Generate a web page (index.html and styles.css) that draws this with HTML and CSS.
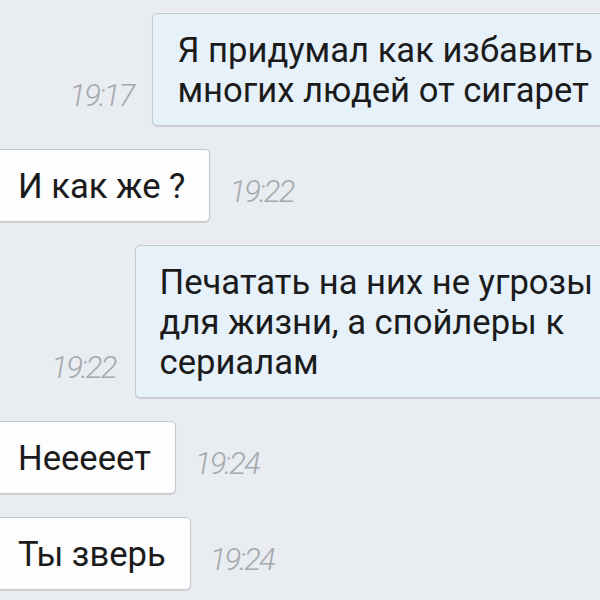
FILE: index.html
```html
<!DOCTYPE html>
<html lang="ru">
<head>
    <meta charset="UTF-8">
    <meta name="viewport" content="width=device-width, initial-scale=1.0">
    <title>Чат</title>
    <link rel="stylesheet" href="styles.css">
</head>
<body>
    <div class="chat">
        <div class="row out">
            <span class="time">19:17</span>
            <div class="bubble">Я придумал как избавить<br>многих людей от сигарет</div>
        </div>
        <div class="row in">
            <div class="bubble">И как же ?</div>
            <span class="time">19:22</span>
        </div>
        <div class="row out">
            <span class="time">19:22</span>
            <div class="bubble">Печатать на них не угрозы<br>для жизни, а спойлеры к<br>сериалам</div>
        </div>
        <div class="row in">
            <div class="bubble">Нееееет</div>
            <span class="time">19:24</span>
        </div>
        <div class="row in">
            <div class="bubble">Ты зверь</div>
            <span class="time">19:24</span>
        </div>
    </div>
</body>
</html>
```

FILE: styles.css
```css
body {
    margin: 0;
    height: 100vh;
    overflow: hidden;
    background-color: #e9ecf0;
    font-family: Roboto, "Noto Sans", sans-serif;
}
.chat {
    display: flex;
    flex-direction: column;
    gap: 23px;
    padding-top: 13px;
}
.row {
    display: flex;
    align-items: flex-end;
    gap: 19px;
}
.out {
    justify-content: flex-end;
    margin-right: -18px;
}
.in {
    margin-left: -7px;
}
.bubble {
    border: 1px solid #c4c9cf;
    border-radius: 5px;
    padding: 16px 24px 15px 24px;
    font-size: 34.6px;
    line-height: 40px;
    color: #1b1b1b;
    white-space: nowrap;
    box-shadow: 0 1px 1px rgba(0, 0, 0, 0.12);
}
.out .bubble {
    background-color: #e6f1f9;
}
.in .bubble {
    background-color: #fdfdfd;
}
.time {
    font-size: 31px;
    font-weight: 300;
    font-style: italic;
    letter-spacing: -1.8px;
    line-height: 35px;
    color: #a5a9ae;
    padding-bottom: 13px;
}
```
